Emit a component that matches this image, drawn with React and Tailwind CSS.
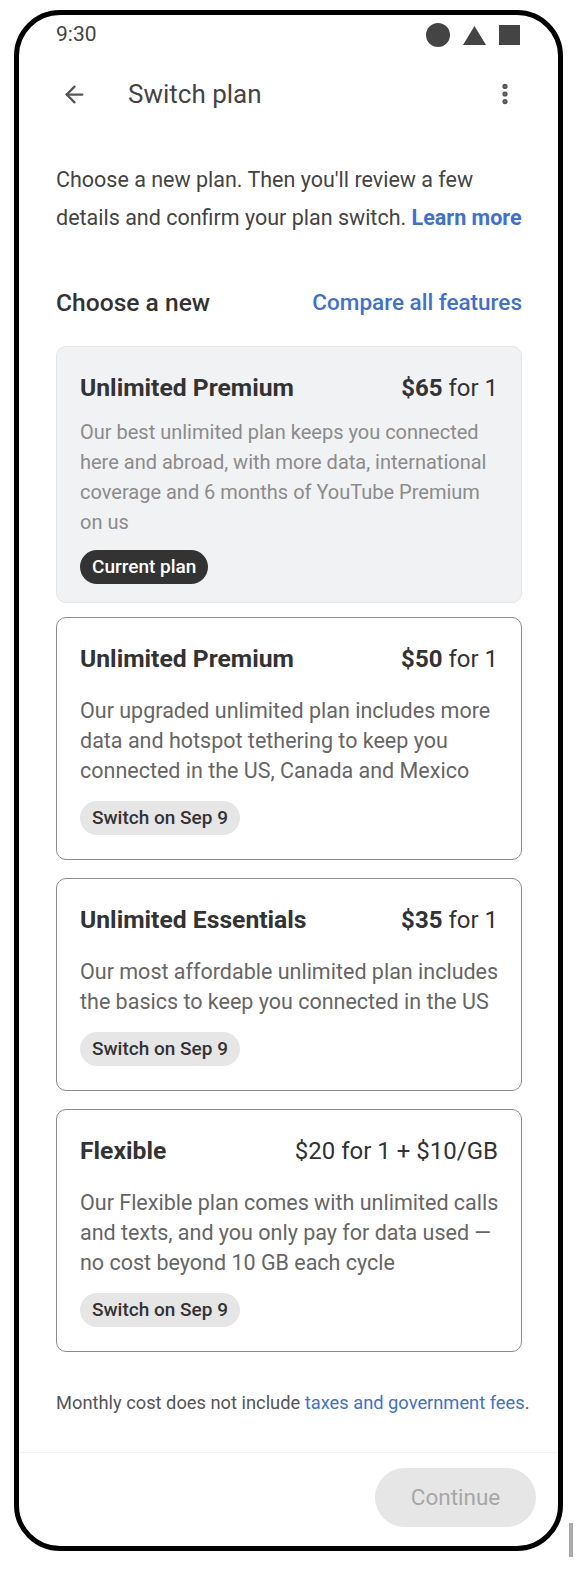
import { ArrowLeft, MoreVertical } from 'lucide-react';

const plans = [
    {
        name: 'Unlimited Premium',
        price: '$65',
        unit: 'for 1',
        desc: 'Our best unlimited plan keeps you connected here and abroad, with more data, international coverage and 6 months of YouTube Premium on us',
        current: true,
    },
    {
        name: 'Unlimited Premium',
        price: '$50',
        unit: 'for 1',
        desc: 'Our upgraded unlimited plan includes more data and hotspot tethering to keep you connected in the US, Canada and Mexico',
    },
    {
        name: 'Unlimited Essentials',
        price: '$35',
        unit: 'for 1',
        desc: 'Our most affordable unlimited plan includes the basics to keep you connected in the US',
    },
    {
        name: 'Flexible',
        price: null,
        unit: '$20 for 1 + $10/GB',
        desc: 'Our Flexible plan comes with unlimited calls and texts, and you only pay for data used — no cost beyond 10 GB each cycle',
    },
];

const PlanCard = ({ plan }) => {
    if (plan.current) {
        return (
            <div className="rounded-[10px] border border-[#e3e4e6] bg-[#f1f2f4] px-[23px] pt-[27px] pb-[18px]">
                <div className="flex items-center justify-between h-[28px]">
                    <span className="text-[24.7px] font-bold text-[#333]">{plan.name}</span>
                    <span className="text-[24px] text-[#333]">
                        <span className="font-bold">{plan.price}</span> {plan.unit}
                    </span>
                </div>
                <p className="mt-[15px] w-[418px] text-[20px] leading-[30px] text-[#8b8b8b]">{plan.desc}</p>
                <div className="mt-[13px] flex">
                    <span className="h-[34px] px-[12px] flex items-center rounded-full bg-[#333] text-white text-[19px] font-medium">
                        Current plan
                    </span>
                </div>
            </div>
        );
    }
    return (
        <div className="rounded-[10px] border border-[#8c8c8c] bg-white px-[23px] pt-[27px] pb-[24px]">
            <div className="flex items-center justify-between h-[28px]">
                <span className="text-[24.7px] font-bold text-[#333]">{plan.name}</span>
                <span className="text-[24px] text-[#333]">
                    {plan.price && <span className="font-bold">{plan.price} </span>}
                    {plan.unit}
                </span>
            </div>
            <p className="mt-[23px] w-[428px] text-[21.5px] leading-[30px] text-[#666]">{plan.desc}</p>
            <div className="mt-[15px] flex">
                <span className="h-[34px] px-[12px] flex items-center rounded-full bg-[#e6e6e6] text-[#333] text-[19px] font-medium">
                    Switch on Sep 9
                </span>
            </div>
        </div>
    );
};

export default function App() {
    return (
        <div className="relative w-[578px] h-[1572px] bg-white font-['Roboto',sans-serif]">
            <div className="ml-[14px] pt-[10px]">
                <div className="w-[549px] h-[1541px] border-[5px] border-black rounded-[46px] overflow-hidden flex flex-col">
                    {/* status bar */}
                    <div className="h-[40px] flex items-center justify-between pl-[37px] pr-[38px]">
                        <span className="text-[21px] text-[#444]">9:30</span>
                        <div className="flex items-center gap-[13px]">
                            <div className="w-[24px] h-[24px] rounded-full bg-[#444]" />
                            <svg width="23" height="19" viewBox="0 0 23 19"><path d="M11.5 0 L23 19 L0 19 Z" fill="#444" /></svg>
                            <div className="w-[21px] h-[20px] bg-[#444]" />
                        </div>
                    </div>

                    {/* header */}
                    <div className="h-[78px] flex items-center pl-[42px] pr-[40px]">
                        <ArrowLeft size={27} strokeWidth={2} className="text-[#555]" />
                        <span className="ml-[40px] text-[26px] text-[#444]">Switch plan</span>
                        <MoreVertical size={26} strokeWidth={2.8} className="ml-auto text-[#555]" />
                    </div>

                    <div className="pl-[37px] pr-[36px]">
                        <p className="mt-[28px] w-[480px] text-[21.5px] leading-[38px] text-[#444]">
                            Choose a new plan. Then you'll review a few details and confirm your plan switch.{' '}
                            <span className="font-bold text-[#3f6fd8]">Learn more</span>
                        </p>

                        <div className="mt-[51px] h-[30px] flex items-center justify-between">
                            <span className="text-[24.6px] font-medium text-[#333]">Choose a new</span>
                            <span className="text-[22.5px] font-medium text-[#3f6fd8]">Compare all features</span>
                        </div>

                        <div className="mt-[28px] flex flex-col">
                            <PlanCard plan={plans[0]} />
                            <div className="mt-[14px] flex flex-col gap-[18px]">
                                {plans.slice(1).map((p, i) => (
                                    <PlanCard key={i} plan={p} />
                                ))}
                            </div>
                        </div>

                        <p className="mt-[39px] text-[18.3px] leading-[24px] text-[#555] whitespace-nowrap">
                            Monthly cost does not include <span className="text-[#3f6fd8]">taxes and government fees</span>.
                        </p>
                    </div>

                    <div className="mt-auto border-t border-[#f2f4f4] pt-[15px] pb-[19px] pr-[22px] flex justify-end">
                        <div className="w-[161px] h-[59px] rounded-full bg-[#e6e6e6] flex items-center justify-center text-[22.5px] text-[#a6a6a6]">
                            Continue
                        </div>
                    </div>
                </div>
            </div>
            <div className="absolute left-[569px] top-[1523px] w-[4px] h-[34px] bg-[#aaa]" />
        </div>
    );
}
